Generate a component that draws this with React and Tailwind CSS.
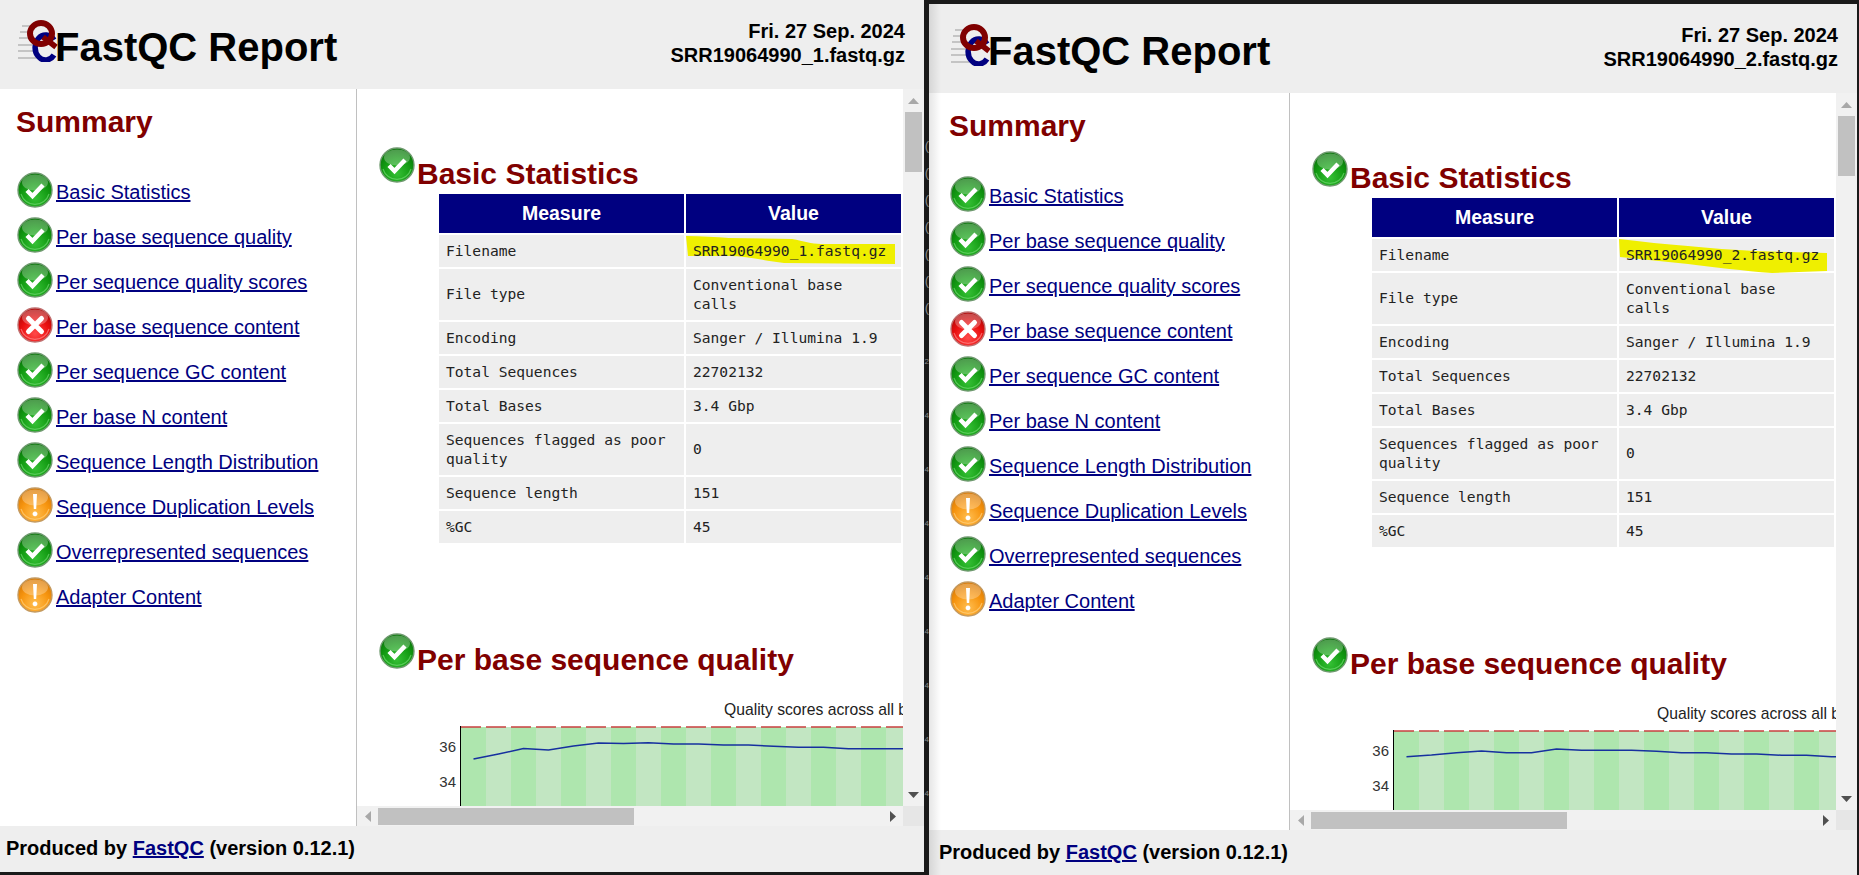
import React from 'react';

const sidebarItems = [
  ['ok', 'Basic Statistics'],
  ['ok', 'Per base sequence quality'],
  ['ok', 'Per sequence quality scores'],
  ['fail', 'Per base sequence content'],
  ['ok', 'Per sequence GC content'],
  ['ok', 'Per base N content'],
  ['ok', 'Sequence Length Distribution'],
  ['warn', 'Sequence Duplication Levels'],
  ['ok', 'Overrepresented sequences'],
  ['warn', 'Adapter Content'],
];

const barKeys = Array.from({ length: 18 }, (_, i) => i);

// bits of the terminal behind the windows that show in the gap
const gutterGlyphs = ['(', '(', '(', '(', '(', '(', '(', '', '2', '', '4', '', '4', '', '4', '', '4', '', '4', '', '4', '', '4', '', '4'];

const icons = {
  ok: { id: 'okFill', light: '#35c035', mid: '#129a12', dark: '#0a760a', ring: '#6f9a6f', rim: '#7fe07f' },
  fail: { id: 'failFill', light: '#ff4a4a', mid: '#ea0f0f', dark: '#b00808', ring: '#c07070', rim: '#ff9a9a' },
  warn: { id: 'warnFill', light: '#ffbe50', mid: '#f7950f', dark: '#d97a05', ring: '#c49a60', rim: '#ffd890' },
};

function StatusIcon({ type }) {
  const c = icons[type];
  return (
    <svg width="36" height="36" viewBox="0 0 36 36" className="shrink-0">
      <defs>
        <radialGradient id={c.id} cx="50%" cy="75%" r="70%">
          <stop offset="0%" stopColor={c.light} />
          <stop offset="60%" stopColor={c.mid} />
          <stop offset="100%" stopColor={c.dark} />
        </radialGradient>
      </defs>
      <circle cx="18" cy="18" r="17" fill={`url(#${c.id})`} stroke={c.ring} strokeWidth="1.4" />
      <path d="M4 22 A14.6 14.6 0 0 0 32 22" fill="none" stroke={c.rim} strokeWidth="1.2" opacity="0.6" />
      <ellipse cx="18" cy="10.5" rx="13" ry="8" fill="#fff" opacity="0.28" />
      {type === 'ok' && (
        <path d="M10 18.5 L15.5 24 L26 13" fill="none" stroke="#fff" strokeWidth="4.4" strokeLinejoin="miter" />
      )}
      {type === 'fail' && (
        <path d="M11.5 11.5 L24.5 24.5 M24.5 11.5 L11.5 24.5" fill="none" stroke="#fff" strokeWidth="5" strokeLinecap="round" />
      )}
      {type === 'warn' && (
        <path d="M16 7 h4 l-0.8 15 h-2.4 z M18 24.5 a2.4 2.4 0 1 0 0.01 0 z" fill="#fff" />
      )}
    </svg>
  );
}

function Logo() {
  return (
    <svg width="40" height="42" viewBox="0 0 40 42" className="shrink-0">
      <g stroke="#c4c4c4" strokeWidth="2">
        <path d="M4 6 H14 M2 12 H12 M1 18 H12 M0 25 H14 M0 31 H16 M0 38 H18" />
      </g>
      <path d="M36 20 A10.5 12.5 0 1 0 36 35" fill="none" stroke="#000080" strokeWidth="5.5" />
      <ellipse cx="23" cy="13.5" rx="11" ry="10.5" fill="none" stroke="#800000" strokeWidth="6" />
      <path d="M25 17 L38 27" stroke="#800000" strokeWidth="5.5" />
    </svg>
  );
}

function Chart({ points }) {
  const line = points.map((y, i) => `${43.5 + i * 25},${y}`).join(' ');
  return (
    <svg width="474" height="106" viewBox="0 0 474 106" className="block">
      {barKeys.map((i) => (
        <rect key={i} x={31 + i * 25} y="27" width="25" height="79" fill={i % 2 === 0 ? '#aee6ae' : '#c2e6c2'} />
      ))}
      <path d="M30.5 26 V106" stroke="#000" strokeWidth="1" />
      <path d="M31 27 H474" stroke="#c94040" strokeWidth="1.5" strokeDasharray="20 5" />
      <polyline points={line} fill="none" stroke="#16309f" strokeWidth="1.5" />
      <text x="294" y="15" fontSize="15.7" fill="#222" fontFamily="Liberation Sans, sans-serif">Quality scores across all b</text>
      <text x="26" y="52" textAnchor="end" fontSize="15" fill="#333" fontFamily="Liberation Sans, sans-serif">36</text>
      <text x="26" y="87" textAnchor="end" fontSize="15" fill="#333" fontFamily="Liberation Sans, sans-serif">34</text>
    </svg>
  );
}

function SectionHeading({ children }) {
  return (
    <div className="flex items-start">
      <StatusIcon type="ok" />
      <h2 className="mt-[9px] ml-[2px] text-[30px] leading-[36px] font-bold text-[#800000] whitespace-nowrap">{children}</h2>
    </div>
  );
}

function StatsTable({ filename, highlight }) {
  const rows = [
    ['Filename', filename, 'h-[32px]'],
    ['File type', 'Conventional base calls', 'h-[51px]'],
    ['Encoding', 'Sanger / Illumina 1.9', 'h-[32px]'],
    ['Total Sequences', '22702132', 'h-[32px]'],
    ['Total Bases', '3.4 Gbp', 'h-[32px]'],
    ['Sequences flagged as poor quality', '0', 'h-[51px]'],
    ['Sequence length', '151', 'h-[32px]'],
    ['%GC', '45', 'h-[32px]'],
  ];
  return (
    <table className="relative ml-[58px] w-[466px] table-fixed border-separate border-spacing-[2px] text-[14.6px] leading-[19px] text-[#222] font-['DejaVu_Sans_Mono',monospace]">
      <thead>
        <tr>
          <th className="w-[245px] h-[39px] bg-[#000080] text-white text-[19.5px] font-bold font-['Liberation_Sans',sans-serif]">Measure</th>
          <th className="h-[39px] bg-[#000080] text-white text-[19.5px] font-bold font-['Liberation_Sans',sans-serif]">Value</th>
        </tr>
      </thead>
      <tbody>
        {rows.map(([name, value, h]) => (
          <tr key={name}>
            <td className={`${h} bg-[#eeeeee] px-[7px] pb-[2px]`}>{name}</td>
            <td className={`${h} bg-[#eeeeee] px-[7px] pb-[2px] ${name === 'Filename' ? 'relative whitespace-nowrap' : ''}`}>
              {name === 'Filename' && (
                <svg width="216" height="36" viewBox="0 0 216 36" className="absolute left-0 top-0">
                  <path d={highlight} fill="#efef00" />
                </svg>
              )}
              <span className="relative">{value}</span>
            </td>
          </tr>
        ))}
      </tbody>
    </table>
  );
}

function Arrow({ dir }) {
  const d = {
    up: 'M0 6 L5.5 0 L11 6 Z',
    down: 'M0 0 L5.5 6 L11 0 Z',
    left: 'M6 0 L0 5.5 L6 11 Z',
    right: 'M0 0 L6 5.5 L0 11 Z',
  }[dir];
  const color = dir === 'left' || dir === 'up' ? '#a8a8a8' : '#505050';
  const vertical = dir === 'up' || dir === 'down';
  return (
    <svg width={vertical ? 11 : 6} height={vertical ? 6 : 11} viewBox={vertical ? '0 0 11 6' : '0 0 6 11'}>
      <path d={d} fill={color} />
    </svg>
  );
}

function ReportWindow({ filename, highlight, points, className, shadow }) {
  return (
    <div className={`relative flex h-[872px] w-[928px] shrink-0 flex-col overflow-hidden bg-white font-['Liberation_Sans',Arial,sans-serif] ${className}`}>
      {shadow && <div className="absolute inset-y-0 left-0 w-[12px] bg-gradient-to-r from-black/10 to-transparent" />}
      <header className="flex h-[89px] shrink-0 items-start justify-between bg-[#eeeeee] pr-[19px]">
        <div className="flex items-start pl-[22px] pt-[20px] text-black">
          <Logo />
          <h1 className="mt-[4px] -ml-[3px] text-[40px] leading-[46px] font-bold whitespace-nowrap">FastQC Report</h1>
        </div>
        <div className="pt-[19px] text-right text-[20px] leading-[24px] font-bold text-black">
          <div>Fri. 27 Sep. 2024</div>
          <div>{filename}</div>
        </div>
      </header>

      <main className="flex min-h-0 flex-1">
        <aside className="w-[361px] shrink-0 border-r border-[#c0c0c0] pl-[21px]">
          <h2 className="mt-[15px] -ml-[1px] text-[30px] leading-[36px] font-bold text-[#800000]">Summary</h2>
          <ul className="mt-[32px] flex flex-col gap-[9px]">
            {sidebarItems.map(([type, label]) => (
              <li key={label} className="flex h-[36px] items-center">
                <StatusIcon type={type} />
                <a href="#" className="ml-[3px] mt-[4px] text-[20px] leading-[24px] text-[#000080] underline whitespace-nowrap">{label}</a>
              </li>
            ))}
          </ul>
        </aside>

        <div className="flex min-w-0 flex-1 flex-col">
          <div className="flex min-h-0 flex-1">
            <div className="min-w-0 flex-1 overflow-hidden pl-[22px] pt-[58px]">
              <SectionHeading>Basic Statistics</SectionHeading>
              <StatsTable filename={filename} highlight={highlight} />
              <div className="mt-[88px]">
                <SectionHeading>Per base sequence quality</SectionHeading>
              </div>
              <div className="ml-[51px] mt-[22px]">
                <Chart points={points} />
              </div>
            </div>
            <div className="flex w-[21px] shrink-0 flex-col items-center bg-[#f1f1f1]">
              <div className="flex h-[23px] shrink-0 items-center justify-center"><Arrow dir="up" /></div>
              <div className="h-[60px] w-[17px] shrink-0 bg-[#c1c1c1]" />
              <div className="flex-1" />
              <div className="flex h-[23px] shrink-0 items-center justify-center"><Arrow dir="down" /></div>
            </div>
          </div>
          <div className="flex h-[20px] shrink-0">
            <div className="flex min-w-0 flex-1 items-center bg-[#f1f1f1]">
              <div className="flex w-[21px] shrink-0 justify-center"><Arrow dir="left" /></div>
              <div className="h-[17px] w-[256px] shrink-0 bg-[#c1c1c1]" />
              <div className="flex-1" />
              <div className="flex w-[21px] shrink-0 justify-center"><Arrow dir="right" /></div>
            </div>
            <div className="w-[21px] shrink-0 bg-[#e6e6e6]" />
          </div>
        </div>
      </main>

      <footer className="flex h-[46px] shrink-0 items-start bg-[#eeeeee] pl-[10px] pt-[10px] text-[20px] leading-[24px] font-bold text-black whitespace-nowrap">
        <span>Produced by&nbsp;</span>
        <a href="#" className="text-[#000080] underline">FastQC</a>
        <span>&nbsp;(version 0.12.1)</span>
      </footer>
    </div>
  );
}

export default function App() {
  return (
    <div className="flex h-[875px] w-[1859px] overflow-hidden bg-[#1a1a1a]">
      <ReportWindow
        className="-ml-[4px]"
        filename="SRR19064990_1.fastq.gz"
        highlight="M0 1 C15 1 30 2 43 3 L106 4 C118 6 125 9 135 9 L209 9 L209 29 L98 28 C80 26 60 21 43 21 L2 21 Z"
        points={[59, 54, 48.5, 50, 46, 43, 43.5, 42.7, 44, 44, 45, 45, 46.3, 47.3, 47.3, 48.7, 48.7, 48.7, 48.7]}
      />
      <div className="flex w-[5px] shrink-0 flex-col items-end pt-[132px] font-['Liberation_Sans',sans-serif] leading-[27px] text-[#8a8a8a]">
        {gutterGlyphs.map((g, i) => (
          <div key={i} className={`h-[27px] ${g === '(' ? 'text-[13px]' : 'text-[8px]'}`}>{g}</div>
        ))}
      </div>
      <ReportWindow
        className="mt-[4px]"
        shadow
        filename="SRR19064990_2.fastq.gz"
        highlight="M0 0 C25 3 45 5 69 7 C90 9 115 11 136 12 L208 14 L208 32 L153 34 C125 32 95 28 69 25 L1 18 Z"
        points={[52.7, 51, 48.7, 47, 48.7, 48.7, 45, 46.3, 46.3, 46.3, 47.3, 48.7, 48.7, 50, 50, 51.3, 51.3, 52.7, 52.7]}
      />
    </div>
  );
}
